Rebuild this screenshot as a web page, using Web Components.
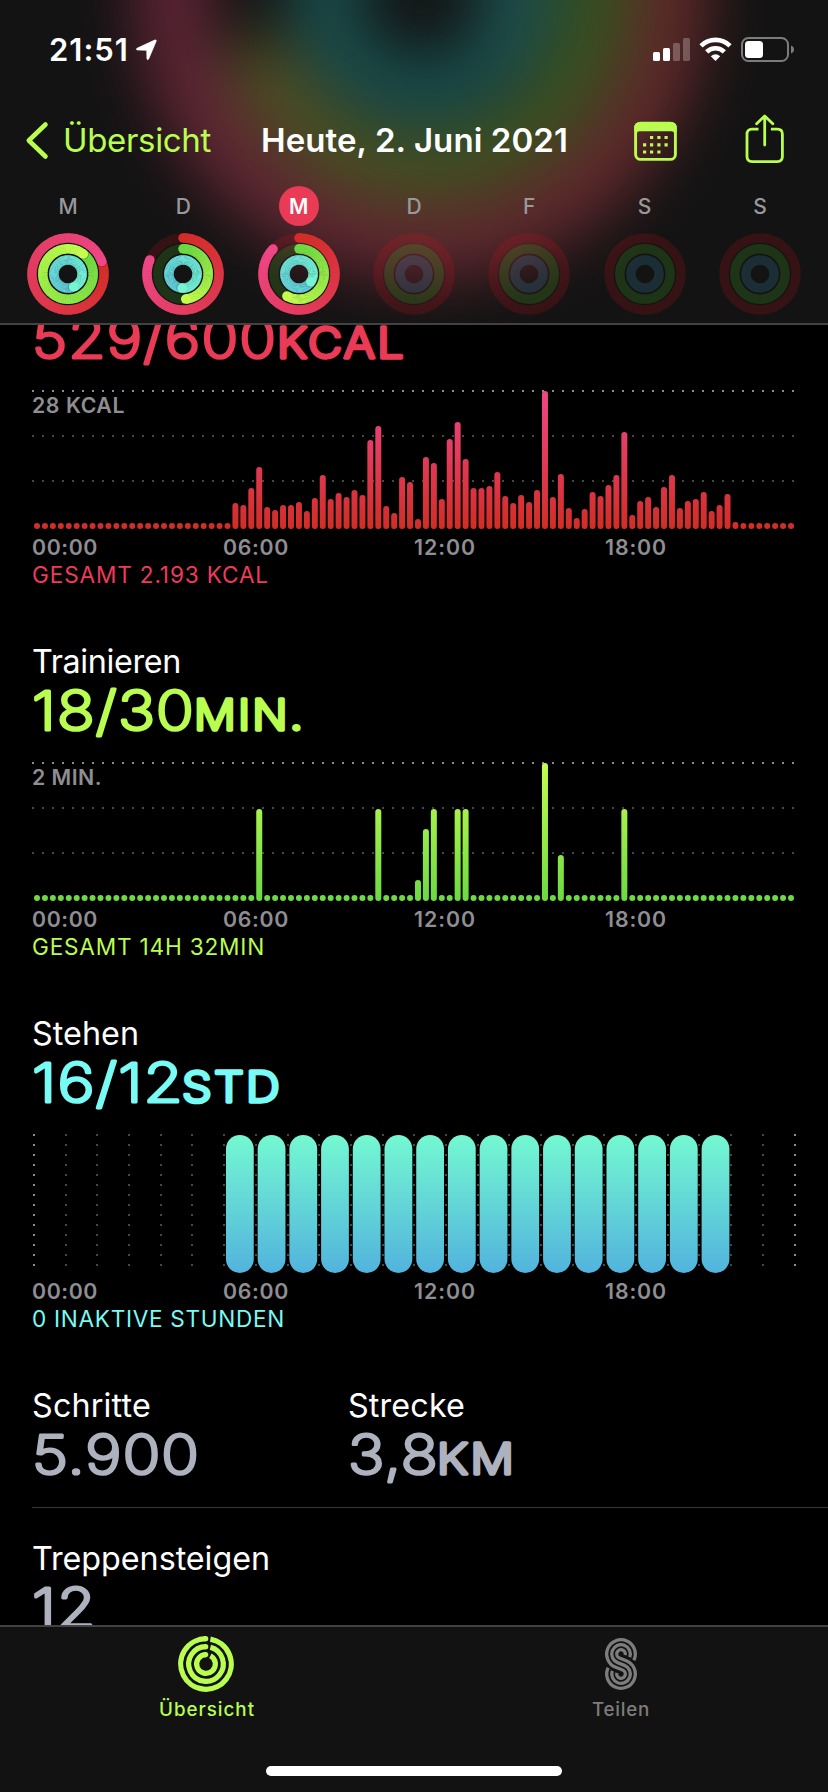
<!DOCTYPE html>
<html lang="de">
<head>
<meta charset="utf-8">
<title>Aktivität</title>
<style>
    body {
        margin: 0;
        background: #000;
        font-family: Inter, "Liberation Sans", sans-serif;
    }
</style>
</head>
<body>
<activity-app></activity-app>

<script>
const MOVE = ['#d32d27', '#ee4788'];
const EXERCISE = ['#6cd943', '#c5fd4f'];
const STAND = ['#60cadb', '#74f6d3'];

// softer tints for the light behind the header
const GLOW = [['#d8503a', '#d83c78'], ['#48b428', '#a8a83a'], ['#1c9c9c', '#2aa8a8']];

function mix(from, to, t) {
    let out = '#';
    for (let i = 1; i < 7; i += 2) {
        let a = parseInt(from.substr(i, 2), 16);
        let b = parseInt(to.substr(i, 2), 16);
        out += Math.round(a + (b - a) * t).toString(16).padStart(2, '0');
    }
    return out;
}

// point on a circle around 0,0 - 0deg is at the top, clockwise
function polar(r, deg) {
    let rad = deg * Math.PI / 180;
    return [(r * Math.sin(rad)).toFixed(2), (-r * Math.cos(rad)).toFixed(2)];
}

// one progress ring, cut in short arcs so the colour can follow the sweep
function ring(r, w, turns, colors) {
    if (!turns) return '';
    let start = turns > 1 ? (turns - 1) * 360 : 0;
    let sweep = Math.min(turns, 1) * 360;
    let steps = 90;
    let out = '';
    if (turns < 1) {
        let [cx, cy] = polar(r, 0);
        out += `<circle cx="${cx}" cy="${cy}" r="${w / 2}" fill="${colors[0]}"/>`;
    }
    for (let i = 0; i < steps; i++) {
        let a = start + sweep * i / steps;
        let b = start + sweep * (i + 1) / steps + (i < steps - 1 ? 1 : 0);
        let [x1, y1] = polar(r, a);
        let [x2, y2] = polar(r, b);
        out += `<path d="M${x1} ${y1}A${r} ${r} 0 0 1 ${x2} ${y2}" stroke="${mix(colors[0], colors[1], i / steps)}" stroke-width="${w}" fill="none"/>`;
    }
    if (turns > 1) {
        let [sx, sy] = polar(r, start + 55 / r);
        out += `<circle cx="${sx}" cy="${sy}" r="${w / 2}" fill="#000" opacity=".2"/>`;
    }
    let [ex, ey] = polar(r, start + sweep);
    out += `<circle cx="${ex}" cy="${ey}" r="${w / 2}" fill="${colors[1]}"/>`;
    return out;
}

function rings(move, exercise, stand, colors = [MOVE, EXERCISE, STAND]) {
    return ring(36, 9.5, move, colors[0]) + ring(25.2, 9.5, exercise, colors[1]) + ring(14.1, 9.5, stand, colors[2]);
}

// text set to a fixed width by its tracking
class FitText extends HTMLElement {
    constructor() {
        super();
        this.attachShadow({mode: 'open'});
        this.shadowRoot.innerHTML = `
            <style>
                :host { display: block; white-space: nowrap; }
                span { display: inline-block; }
            </style>
            <span><slot></slot></span>`;
    }
    connectedCallback() {
        let count = this.textContent.length;
        if (!count) return;
        let span = this.shadowRoot.querySelector('span');
        let natural = span.getBoundingClientRect().width;
        span.style.letterSpacing = (this.getAttribute('width') - natural) / count + 'px';
    }
}
customElements.define('fit-text', FitText);

class StatusBar extends HTMLElement {
    constructor() {
        super();
        this.attachShadow({mode: 'open'});
        this.shadowRoot.innerHTML = `
            <style>
                :host {
                    display: flex;
                    justify-content: space-between;
                    height: 100px;
                    padding: 0 33px 0 49px;
                    box-sizing: border-box;
                    color: #fff;
                }
                .left { display: flex; gap: 7px; padding-top: 31px; }
                .left svg { margin-top: 7px; }
                fit-text { font-size: 31px; line-height: 38px; font-weight: 560; }
                .right { display: flex; gap: 9px; padding-top: 36px; align-items: flex-start; }
            </style>
            <div class="left">
                <fit-text width="80">21:51</fit-text>
                <svg width="22" height="23" viewBox="0 0 22 23"><path d="M1.2 10.2 18.8 2.1Q20.8 1.4 20 3.4L12.6 21Q11.7 22.6 11 21L10.8 12.2 1.4 11.9Q-.6 11.4 1.2 10.2Z" fill="#fff" stroke="#fff" stroke-width=".8"/></svg>
            </div>
            <div class="right">
                <svg width="37" height="26" viewBox="0 0 37 26" fill="#fff">
                    <rect x="0" y="16" width="7" height="9" rx="1.6"/>
                    <rect x="10" y="12" width="7" height="13" rx="1.6"/>
                    <rect x="20" y="7" width="7" height="18" rx="1.6" opacity=".25"/>
                    <rect x="30" y="2" width="7" height="23" rx="1.6" opacity=".25"/>
                </svg>
                <svg width="33" height="26" viewBox="0 0 33 26">
                    <g fill="none" stroke="#fff" stroke-width="4.6">
                        <path d="M2 9.8A20.6 20.6 0 0 1 31 9.8"/>
                        <path d="M7.7 15.8A12.6 12.6 0 0 1 25.3 15.8"/>
                    </g>
                    <path d="M16.5 25 11.8 20.3Q16.5 16.4 21.2 20.3Z" fill="#fff"/>
                </svg>
                <svg width="54" height="27" viewBox="0 0 54 27">
                    <rect x="1" y="2" width="46" height="23" rx="6.5" fill="none" stroke="#7d7b7b" stroke-width="2"/>
                    <rect x="4" y="5" width="18" height="17" rx="3.5" fill="#fff"/>
                    <path d="M50 9.5Q53 10.6 53 13.5T50 17.5Z" fill="#7d7b7b"/>
                </svg>
            </div>`;
    }
}
customElements.define('status-bar', StatusBar);

class NavBar extends HTMLElement {
    constructor() {
        super();
        this.attachShadow({mode: 'open'});
        this.shadowRoot.innerHTML = `
            <style>
                :host {
                    display: flex;
                    align-items: center;
                    height: 81px;
                    padding: 0 44px 0 25px;
                    box-sizing: border-box;
                    font-size: 33px;
                    line-height: 40px;
                }
                .back { display: flex; align-items: center; gap: 13px; color: #b9fd50; width: 236px; }
                .title { color: #fff; font-weight: 560; flex: 1; }
                .actions { display: flex; gap: 68px; align-items: center; }
                .back fit-text, .title { padding-bottom: 1px; }
                .share { margin-top: -5px; }
            </style>
            <div class="back">
                <svg width="25" height="40" viewBox="0 0 25 40"><path d="M20.5 3.5 3.8 19.5 20.5 35.5" fill="none" stroke="#b9fd50" stroke-width="4.6" stroke-linecap="round" stroke-linejoin="round"/></svg>
                <fit-text width="148">Übersicht</fit-text>
            </div>
            <fit-text class="title" width="307">Heute, 2. Juni 2021</fit-text>
            <div class="actions">
                <svg width="43" height="40" viewBox="0 0 43 40">
                    <rect x="1.6" y="2.1" width="39.8" height="36.3" rx="5" fill="none" stroke="#b9fd50" stroke-width="2.9"/>
                    <path d="M.2 10.2V7Q.2 1 6.2 1H36.8Q42.8 1 42.8 7V10.2Z" fill="#b9fd50"/>
                    <path d="M2.9 13Q2.9 10 5.9 10H2.9ZM40.1 13Q40.1 10 37.1 10H40.1Z" fill="#b9fd50"/>
                    <path d="M16 16.5h3.2M23.3 16.5h3.2M30.5 16.5h3.2M9 23.8h3.2M16 23.8h3.2M23.3 23.8h3.2M30.5 23.8h3.2M9 31h3.2M16 31h3.2M23.3 31h3.2" stroke="#b9fd50" stroke-width="3.2"/>
                </svg>
                <svg class="share" width="39" height="50" viewBox="0 0 39 50" fill="none" stroke="#b9fd50" stroke-width="2.8">
                    <path d="M13.5 16.2H7Q2 16.2 2 21.2V43.6Q2 48.6 7 48.6H32.4Q37.4 48.6 37.4 43.6V21.2Q37.4 16.2 32.4 16.2H25.9"/>
                    <path d="M19.7 32V3.5M11.6 10.8 19.7 2.9 27.8 10.8" stroke-linecap="round" stroke-linejoin="round"/>
                </svg>
            </div>`;
    }
}
customElements.define('nav-bar', NavBar);

class DayRings extends HTMLElement {
    constructor() {
        super();
        this.attachShadow({mode: 'open'});
    }
    connectedCallback() {
        let num = name => Number(this.getAttribute(name) || 0);
        this.shadowRoot.innerHTML = `
            <style>
                :host {
                    display: flex;
                    flex-direction: column;
                    align-items: center;
                    gap: 6px;
                    width: 84px;
                    color: #98989d;
                }
                .day {
                    width: 40px;
                    height: 40px;
                    line-height: 41px;
                    border-radius: 50%;
                    text-align: center;
                    font-size: 21px;
                    font-weight: 500;
                }
                :host([today]) .day { background: #e93a56; color: #fff; font-weight: 600; }
            </style>
            <div class="day"><slot></slot></div>
            <svg width="84" height="84" viewBox="-42 -42 84 84">
                <g fill="none" stroke-width="9.5">
                    <circle r="36" stroke="#e01420" stroke-opacity=".17"/>
                    <circle r="25.2" stroke="#60f028" stroke-opacity=".15"/>
                    <circle r="14.1" stroke="#4abeeb" stroke-opacity=".16"/>
                </g>
                ${rings(num('move'), num('exercise'), num('stand'))}
            </svg>`;
    }
}
customElements.define('day-rings', DayRings);

class WeekHeader extends HTMLElement {
    constructor() {
        super();
        this.attachShadow({mode: 'open'});
        this.shadowRoot.innerHTML = `
            <style>
                :host {
                    display: flex;
                    flex-direction: column;
                    position: relative;
                    flex: none;
                    height: 325px;
                    box-sizing: border-box;
                    overflow: hidden;
                    background: #131313;
                    border-bottom: 2px solid #424242;
                }
                .glow { position: absolute; left: 0; top: 0; opacity: .44; }
                status-bar, nav-bar, .week { position: relative; }
                .week { display: flex; justify-content: space-between; padding: 5px 26px 0; }
            </style>
            <svg class="glow" width="828" height="325" viewBox="0 0 828 325">
                <defs><filter id="soft" filterUnits="userSpaceOnUse" x="-200" y="-500" width="1300" height="1000" color-interpolation-filters="sRGB"><feGaussianBlur stdDeviation="32"/></filter></defs>
                <g filter="url(#soft)"><g transform="translate(422 -6) scale(6.95)">${rings(.9, .68, 1.33, GLOW)}</g></g>
            </svg>
            <status-bar></status-bar>
            <nav-bar></nav-bar>
            <div class="week">
                <day-rings move="1.194" exercise="1.104" stand="1.436">M</day-rings>
                <day-rings move=".814" exercise=".483" stand="1.511">D</day-rings>
                <day-rings today move=".872" exercise=".58" stand="1.345">M</day-rings>
                <day-rings>D</day-rings>
                <day-rings>F</day-rings>
                <day-rings>S</day-rings>
                <day-rings>S</day-rings>
            </div>`;
    }
}
customElements.define('week-header', WeekHeader);

// title and rounded figure, e.g. <metric-value label="Stehen" value="16/12" unit="STD">
class MetricValue extends HTMLElement {
    constructor() {
        super();
        this.attachShadow({mode: 'open'});
    }
    connectedCallback() {
        let get = name => this.getAttribute(name) || '';
        let unit = get('unit') ? `<tspan class="unit" x="${get('unit-x')}" textLength="${get('unit-width')}" lengthAdjust="spacingAndGlyphs">${get('unit')}</tspan>` : '';
        this.shadowRoot.innerHTML = `
            <style>
                :host { display: block; color: #aeb2bf; }
                fit-text { color: #fff; font-size: 32.3px; line-height: 42px; height: 40px; }
                svg { display: block; overflow: visible; }
                text { font-size: 54px; font-weight: 230; letter-spacing: 1px; fill: currentColor; stroke: currentColor; stroke-width: 3.1px; stroke-linejoin: round; }
                .unit { font-size: 42px; font-weight: 260; letter-spacing: 2px; stroke-width: 3.3px; }
            </style>
            <fit-text width="${get('label-width')}">${get('label')}</fit-text>
            <svg width="470" height="80">
                <text x="0" y="48.6"><tspan textLength="${get('value-width')}" lengthAdjust="spacingAndGlyphs">${get('value')}</tspan>${unit}</text>
            </svg>`;
    }
}
customElements.define('metric-value', MetricValue);

// 96 quarter hours, or 24 hours with the "hours" attribute
class DayChart extends HTMLElement {
    constructor() {
        super();
        this.attachShadow({mode: 'open'});
    }
    dots(x, y, color, vertical) {
        let out = '';
        for (let i = 0; i < (vertical ? 14 : 77); i++)
            out += vertical ? `M${x} ${y + i * 10}h2` : `M${x + i * 10} ${y}h2`;
        return `<path d="${out}" stroke="${color}" stroke-width="2"/>`;
    }
    connectedCallback() {
        let colors = this.getAttribute('colors').split(' ');
        let values = {};
        for (let run of this.getAttribute('bars').split(';')) {
            let [from, list] = run.split(':');
            list.split(',').forEach((v, i) => values[Number(from) + i] = Number(v));
        }
        let grid = '';
        let bars = '';
        if (this.hasAttribute('hours')) {
            for (let i = 0; i <= 24; i++)
                grid += this.dots(Math.round(i * 31.69) + 1, 2, i % 24 ? '#474747' : '#8c8c8c', true);
            for (let i in values)
                bars += `<rect x="${(i * 31.71 + 3.7).toFixed(2)}" y="${140 - values[i]}" width="27.8" height="${values[i]}" rx="13.9"/>`;
        } else {
            grid = this.dots(0, 2, '#8c8c8c') + this.dots(0, 47, '#474747') + this.dots(0, 92, '#474747');
            for (let i = 0; i < 96; i++) {
                let h = values[i] || 6;
                bars += `<rect x="${(2 + i * 7.937).toFixed(2)}" y="${140 - h}" width="6" height="${h}" rx="3"/>`;
            }
        }
        let max = this.hasAttribute('max') ? `<fit-text class="max" width="${this.getAttribute('max-width')}">${this.getAttribute('max')}</fit-text>` : '';
        this.shadowRoot.innerHTML = `
            <style>
                :host { display: block; color: #8e8e93; font-size: 21.3px; font-weight: 560; }
                svg { display: block; overflow: visible; }
                .max { position: absolute; margin-top: 3px; line-height: 26px; }
                .axis { display: grid; grid-template-columns: repeat(4, 191px); margin-top: 4px; line-height: 26px; }
                .total { color: var(--accent); font-size: 22.6px; font-weight: 400; line-height: 28px; margin-top: 1px; }
            </style>
            ${max}
            <svg width="764" height="141">
                <defs><linearGradient id="fade" gradientUnits="userSpaceOnUse" x1="0" y1="140" x2="0" y2="2"><stop stop-color="${colors[0]}"/><stop offset="1" stop-color="${colors[1]}"/></linearGradient></defs>
                ${grid}
                <g fill="url(#fade)">${bars}</g>
            </svg>
            <div class="axis">
                <fit-text width="66">00:00</fit-text>
                <fit-text width="66">06:00</fit-text>
                <fit-text width="62">12:00</fit-text>
                <fit-text width="62">18:00</fit-text>
            </div>
            <fit-text class="total" width="${this.getAttribute('total-width')}">${this.getAttribute('total')}</fit-text>`;
    }
}
customElements.define('day-chart', DayChart);

class ActivitySection extends HTMLElement {
    constructor() {
        super();
        this.attachShadow({mode: 'open'});
        this.shadowRoot.innerHTML = `
            <style>
                :host { display: block; height: 372px; padding-left: 32px; box-sizing: border-box; }
            </style>
            <slot></slot>`;
    }
}
customElements.define('activity-section', ActivitySection);

class TabBar extends HTMLElement {
    constructor() {
        super();
        this.attachShadow({mode: 'open'});
        let arcs = [25.3, 17.3, 9.4].map(r => {
            let [x, y] = polar(r, Math.asin(4.4 / r) * 180 / Math.PI);
            return `<path d="M${x} ${y}A${r} ${r} 0 1 1 0 ${-r}"/><circle cx="-.3" cy="${-r}" r="2.6" fill="#b9fd50" stroke="none"/>`;
        }).join('');
        // three parallel strokes, each one an S between an upper and a lower circle
        let strokes = [14.3, 9.3, 4.3].map((r, i) => {
            let low = 18.6 - r;
            let cut = [26, 20, 14];
            let [x1, y1] = polar(r, 90 + cut[i]);
            let [x2, y2] = polar(low, 270 + cut[2 - i]);
            return `<path d="M${x1} ${y1 - 10}A${r} ${r} 0 1 0 ${-.368 * r} ${.93 * r - 10}L${.368 * low} ${10 - .93 * low}A${low} ${low} 0 1 1 ${x2} ${Number(y2) + 10}"/>`;
        }).join('');
        this.shadowRoot.innerHTML = `
            <style>
                :host {
                    display: flex;
                    flex-direction: column;
                    align-items: center;
                    flex: none;
                    height: 167px;
                    box-sizing: border-box;
                    background: #121212;
                    border-top: 2px solid #424242;
                }
                .tabs { display: flex; width: 100%; flex: 1; }
                .tab { flex: 1; display: flex; flex-direction: column; align-items: center; padding-top: 7px; color: #7d7d7d; }
                .tab.active { color: #b9fd50; }
                fit-text { font-size: 18.8px; font-weight: 500; line-height: 24px; margin-top: 4px; }
                .home { width: 296px; height: 10px; border-radius: 5px; background: #fff; margin-bottom: 16px; }
            </style>
            <div class="tabs">
                <div class="tab active">
                    <svg width="60" height="60" viewBox="-29 -30 60 60" fill="none" stroke="#b9fd50" stroke-width="5.2">${arcs}</svg>
                    <fit-text width="96">Übersicht</fit-text>
                </div>
                <div class="tab">
                    <svg width="60" height="60" viewBox="-30 -30 60 60" fill="none" stroke="#7d7d7d" stroke-width="3.3">${strokes}</svg>
                    <fit-text width="58">Teilen</fit-text>
                </div>
            </div>
            <div class="home"></div>`;
    }
}
customElements.define('tab-bar', TabBar);

let appHTML = document.createElement('template');
appHTML.innerHTML = `
<style>
    :host {
        display: flex;
        flex-direction: column;
        width: 828px;
        height: 1792px;
        overflow: hidden;
        background: #000;
    }

    main {
        flex: 1;
        min-height: 0;
        overflow: hidden;
    }

    .scroll {
        margin-top: -56px;
    }

    .move { --accent: #f03a5b; }
    .exercise { --accent: #b9fd50; }
    .stand { --accent: #77fbf4; }

    .move metric-value { color: #e93a56; }
    .exercise metric-value { color: #b9fd50; }
    .stand metric-value { color: #77fbf4; }

    .row {
        display: grid;
        grid-template-columns: 316px 1fr;
        height: 122px;
        margin-left: 32px;
        border-bottom: 1px solid #38383a;
    }

    .row.last {
        padding-top: 30px;
        border: 0;
    }
</style>
<week-header></week-header>
<main>
    <div class="scroll">
        <activity-section class="move">
            <metric-value value="529/600" value-width="245" unit="KCAL" unit-x="245" unit-width="129"></metric-value>
            <day-chart colors="#d12d26 #ee4888" max="28 KCAL" max-width="93" total="GESAMT 2.193 KCAL" total-width="237"
                bars="25:26,24,41,62,22,19,24,24,27,18,31,54,30,36,32,39,34,89,103,23,16,52,47,10,72,66,30,90,107,70,41,41,43,57,33,26,34,27,39,138,32,55,21,11,20,37,33,44,54,97,14,28,32,22,42,54,21,28,30,37,18,24,35,7"></day-chart>
        </activity-section>
        <activity-section class="exercise">
            <metric-value label="Trainieren" label-width="149" value="18/30" value-width="163" unit="MIN." unit-x="162" unit-width="111"></metric-value>
            <day-chart colors="#6cd943 #c5fd4f" max="2 MIN." max-width="70" total="GESAMT 14H 32MIN" total-width="233"
                bars="28:92;43:92;48:21,72,92;53:92,92;64:138;66:46;74:92"></day-chart>
        </activity-section>
        <activity-section class="stand">
            <metric-value label="Stehen" label-width="107" value="16/12" value-width="152" unit="STD" unit-x="150" unit-width="100"></metric-value>
            <day-chart hours colors="#52b3dd #74f8d1" total="0 INAKTIVE STUNDEN" total-width="253"
                bars="6:138,138,138,138,138,138,138,138,138,138,138,138,138,138,138,138"></day-chart>
        </activity-section>
        <div class="row">
            <metric-value label="Schritte" label-width="119" value="5.900" value-width="168"></metric-value>
            <metric-value label="Strecke" label-width="117" value="3,8" value-width="91" unit="KM" unit-x="89" unit-width="79"></metric-value>
        </div>
        <div class="row last">
            <metric-value label="Treppensteigen" label-width="238" value="12" value-width="65"></metric-value>
        </div>
    </div>
</main>
<tab-bar></tab-bar>
`;

class ActivityApp extends HTMLElement {
    constructor() {
        super();
        this.attachShadow({mode: 'open'});
        this.shadowRoot.append(appHTML.content.cloneNode(true));
    }
}
customElements.define('activity-app', ActivityApp);
</script>
</body>
</html>
